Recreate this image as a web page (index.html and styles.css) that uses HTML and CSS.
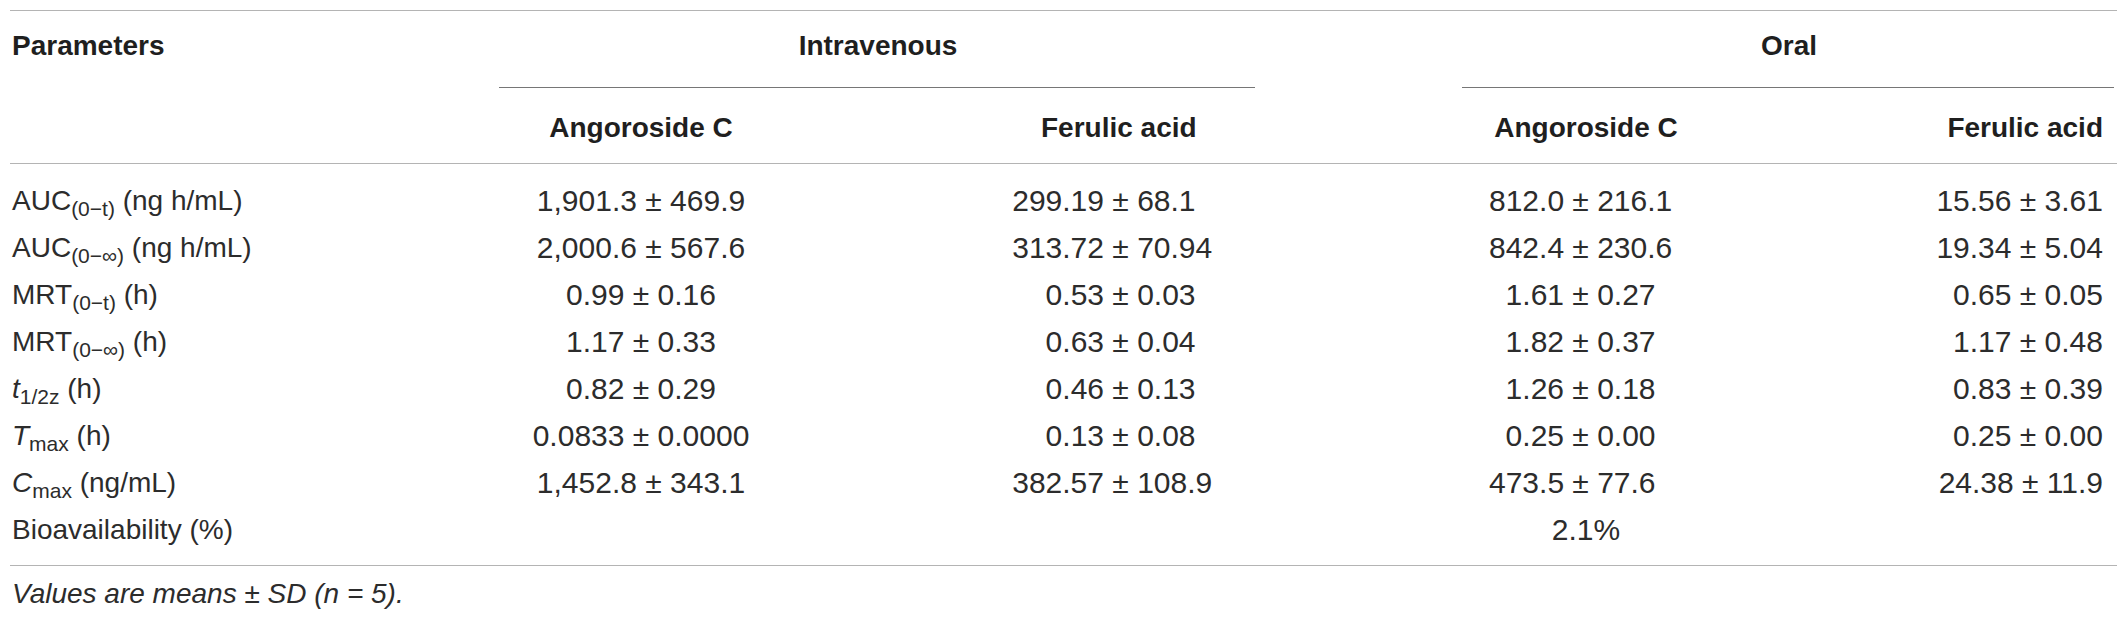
FILE: index.html
```html
<!DOCTYPE html>
<html lang="en">
<head>
<meta charset="utf-8">
<title>Pharmacokinetic parameters</title>
<link rel="stylesheet" href="styles.css">
</head>
<body>
<div class="tbl">
  <div class="row head1">
    <div class="c">Parameters</div>
    <div class="c group iv">Intravenous</div>
    <div class="c"></div>
    <div class="c group oral">Oral</div>
  </div>
  <div class="row head2">
    <div class="c"></div>
    <div class="c center">Angoroside C</div>
    <div class="c fa-iv">Ferulic acid</div>
    <div class="c"></div>
    <div class="c center">Angoroside C</div>
    <div class="c right">Ferulic acid</div>
  </div>
  <div class="body">
    <div class="row">
      <div class="c">AUC<sub>(0−t)</sub> (ng h/mL)</div>
      <div class="c center">1,901.3 ± 469.9</div>
      <div class="c pm-iv"><span class="lead">299.19</span> ± 68.1</div>
      <div class="c"></div>
      <div class="c pm-or"><span class="lead">812.0</span> ± 216.1</div>
      <div class="c right">15.56 ± 3.61</div>
    </div>
    <div class="row">
      <div class="c">AUC<sub>(0−∞)</sub> (ng h/mL)</div>
      <div class="c center">2,000.6 ± 567.6</div>
      <div class="c pm-iv"><span class="lead">313.72</span> ± 70.94</div>
      <div class="c"></div>
      <div class="c pm-or"><span class="lead">842.4</span> ± 230.6</div>
      <div class="c right">19.34 ± 5.04</div>
    </div>
    <div class="row">
      <div class="c">MRT<sub>(0−t)</sub> (h)</div>
      <div class="c center">0.99 ± 0.16</div>
      <div class="c pm-iv"><span class="lead">0.53</span> ± 0.03</div>
      <div class="c"></div>
      <div class="c pm-or"><span class="lead">1.61</span> ± 0.27</div>
      <div class="c right">0.65 ± 0.05</div>
    </div>
    <div class="row">
      <div class="c">MRT<sub>(0−∞)</sub> (h)</div>
      <div class="c center">1.17 ± 0.33</div>
      <div class="c pm-iv"><span class="lead">0.63</span> ± 0.04</div>
      <div class="c"></div>
      <div class="c pm-or"><span class="lead">1.82</span> ± 0.37</div>
      <div class="c right">1.17 ± 0.48</div>
    </div>
    <div class="row">
      <div class="c"><i>t</i><sub>1/2z</sub> (h)</div>
      <div class="c center">0.82 ± 0.29</div>
      <div class="c pm-iv"><span class="lead">0.46</span> ± 0.13</div>
      <div class="c"></div>
      <div class="c pm-or"><span class="lead">1.26</span> ± 0.18</div>
      <div class="c right">0.83 ± 0.39</div>
    </div>
    <div class="row">
      <div class="c"><i>T</i><sub>max</sub> (h)</div>
      <div class="c center">0.0833 ± 0.0000</div>
      <div class="c pm-iv"><span class="lead">0.13</span> ± 0.08</div>
      <div class="c"></div>
      <div class="c pm-or"><span class="lead">0.25</span> ± 0.00</div>
      <div class="c right">0.25 ± 0.00</div>
    </div>
    <div class="row">
      <div class="c"><i>C</i><sub>max</sub> (ng/mL)</div>
      <div class="c center">1,452.8 ± 343.1</div>
      <div class="c pm-iv"><span class="lead">382.57</span> ± 108.9</div>
      <div class="c"></div>
      <div class="c pm-or"><span class="lead">473.5</span> ± 77.6</div>
      <div class="c right">24.38 ± 11.9</div>
    </div>
    <div class="row">
      <div class="c">Bioavailability (%)</div>
      <div class="c center"></div>
      <div class="c"></div>
      <div class="c"></div>
      <div class="c center">2.1%</div>
      <div class="c right"></div>
    </div>
  </div>
  <div class="note">Values are means ± SD (n = 5).</div>
</div>
</body>
</html>
```

FILE: styles.css
```css
html, body {
  margin: 0;
  padding: 0;
  background: #ffffff;
}

body {
  font-family: "Liberation Sans", Arial, Helvetica, sans-serif;
  font-size: 28px;
  color: #2c2c2c;
}

.tbl {
  margin: 10px 0 0 10px;
  width: 2107px;
  border-top: 1px solid #b4b4b4;
}

.row {
  display: grid;
  grid-template-columns: 489px 282px 474px 207px 246px 1fr;
}

.c {
  white-space: nowrap;
  padding-left: 2px;
}

.head1,
.head2 {
  font-weight: bold;
  color: #1f1f1f;
  line-height: 32px;
}

.head1 {
  height: 77px;
  box-sizing: border-box;
}

.head1 .c {
  padding-top: 19px;
  box-sizing: border-box;
}

.group {
  text-align: center;
  border-bottom: 1px solid #767676;
}

.iv {
  grid-column: 2 / 4;
}

.oral {
  grid-column: 5 / 7;
  margin-right: 3px;
}

.head2 {
  height: 76px;
  box-sizing: border-box;
  border-bottom: 1px solid #b4b4b4;
}

.head2 .c {
  padding-top: 24px;
}

.center {
  text-align: center;
}

.right {
  text-align: right;
  padding-right: 14px;
}

.fa-iv {
  padding-left: 260px;
}

.body {
  padding: 13px 0 12px;
  border-bottom: 1px solid #b4b4b4;
  line-height: 47px;
}

.body .c + .c {
  font-size: 30px;
}

.pm-iv {
  padding-left: 231px;
}

.pm-or {
  padding-left: 27px;
}

.pm-iv .lead,
.pm-or .lead {
  display: inline-block;
  text-align: right;
}

.pm-iv .lead {
  width: 92px;
}

.pm-or .lead {
  width: 75px;
}

sub {
  font-size: 21px;
  line-height: 0;
  vertical-align: -6px;
}

.note {
  font-style: italic;
  line-height: 34px;
  padding: 11px 0 0 2px;
}
```
